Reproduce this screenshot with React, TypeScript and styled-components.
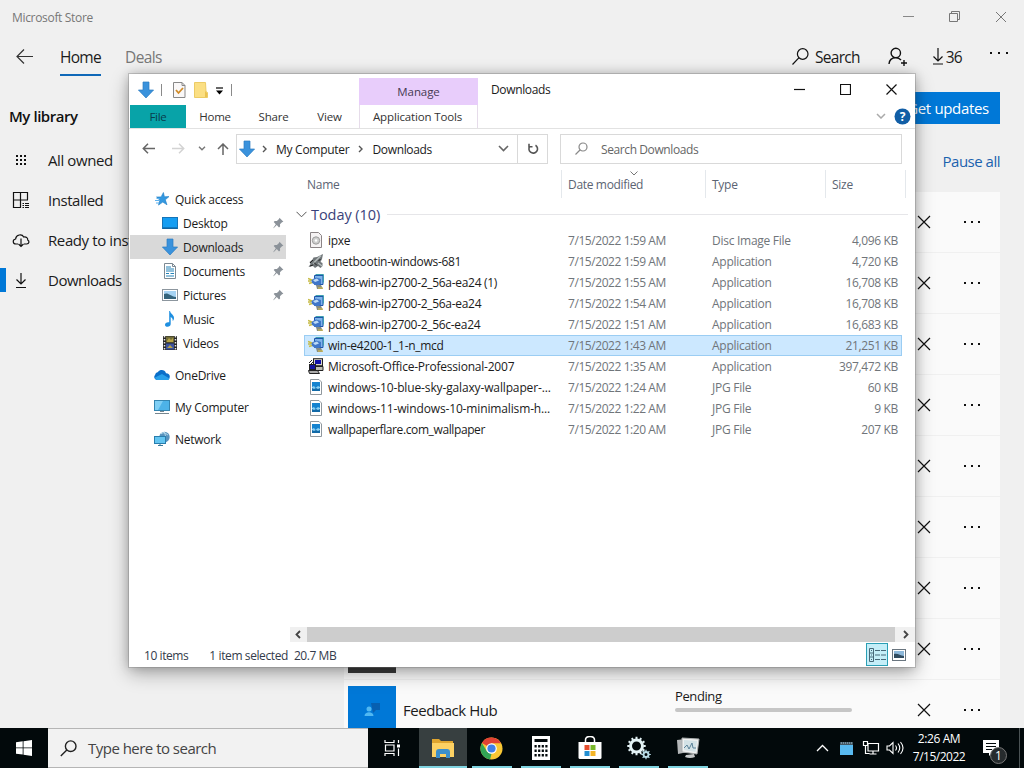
import React from "react";
import styled, { createGlobalStyle, css } from "styled-components";

const Global = createGlobalStyle`
  html, body { margin: 0; padding: 0; }
  body { font-family: "Open Sans", "Noto Sans", sans-serif; overflow: hidden; }
  * { box-sizing: border-box; }
  svg { display: block; flex: none; }
`;

const Desktop = styled.div`
  position: relative;
  width: 1024px;
  height: 768px;
  display: flex;
  flex-direction: column;
  overflow: hidden;
  background: #f0f0f0;
`;

const Label = styled.span<{ $size?: number; $track?: number; $color?: string; $ml?: number; $mr?: string }>`
  font-size: ${(p) => p.$size ?? 12}px;
  letter-spacing: ${(p) => p.$track ?? -0.27}px;
  color: ${(p) => p.$color ?? "#1b1b1b"};
  margin-left: ${(p) => p.$ml ?? 0}px;
  margin-right: ${(p) => p.$mr ?? "0"};
  padding-top: ${(p) => (p.$size ? 0 : 2)}px;
  line-height: 20px;
  white-space: nowrap;
`;

const Svg = styled.svg<{ $ml?: number; $mr?: number; $mt?: number }>`
  margin-left: ${(p) => p.$ml ?? 0}px;
  margin-right: ${(p) => p.$mr ?? 0}px;
  margin-top: ${(p) => p.$mt ?? 0}px;
`;

/* ---------- Store window ---------- */

const Store = styled.main`
  flex: 1;
  min-height: 0;
  display: flex;
  flex-direction: column;
  overflow: hidden;
`;

const StoreTitle = styled.header`
  height: 33px;
  flex: none;
  display: flex;
  align-items: center;
  justify-content: space-between;
  padding: 0 17px 0 12px;
`;

const StoreControls = styled.div`
  display: flex;
  align-items: center;
  gap: 35px;
`;

const StoreNav = styled.nav`
  height: 49px;
  flex: none;
  display: flex;
  align-items: center;
  padding: 0 14px 2px 16px;
`;

const NavTab = styled.div<{ $active?: boolean }>`
  height: 36px;
  margin-left: ${(p) => (p.$active ? 27 : 24)}px;
  margin-top: 3px;
  padding-top: 6px;
  border-bottom: 2px solid ${(p) => (p.$active ? "#0f68b8" : "transparent")};
`;

const NavActions = styled.div`
  margin-left: auto;
  display: flex;
  align-items: center;
`;

const MoreButton = styled.div`
  margin-bottom: 7px;
`;

const StoreBody = styled.div`
  flex: 1;
  min-height: 0;
  display: flex;
`;

const Library = styled.aside`
  width: 344px;
  padding-top: 24px;
`;

const LibraryHeading = styled.h2`
  margin: 0 0 14px 9px;
  font-size: 15px;
  line-height: 20px;
  font-weight: 600;
  letter-spacing: -0.45px;
  color: #111;
`;

const LibraryItem = styled.div<{ $active?: boolean }>`
  height: 40px;
  display: flex;
  align-items: center;
  gap: 18px;
  &::before {
    content: "";
    width: 6px;
    height: 24px;
    margin-right: -12px;
    background: ${(p) => (p.$active ? "#0078d7" : "transparent")};
  }
`;

const Queue = styled.section`
  width: 656px;
  padding-top: 10px;
  display: flex;
  flex-direction: column;
`;

const UpdateButton = styled.button`
  flex: none;
  align-self: flex-end;
  width: 104px;
  height: 32px;
  padding: 0;
  border: 0;
  background: #0078d7;
  font-family: inherit;
`;

const PauseLink = styled.div`
  flex: none;
  align-self: flex-end;
  margin: 27px 0 21px 0;
  height: 20px;
  line-height: 20px;
`;

const QueueRow = styled.div`
  height: 61px;
  flex: none;
  display: flex;
  align-items: center;
  padding: 0 20px 0 4px;
  background: #fafafa;
  border-bottom: 1px solid #f0f0f0;
`;

const AppTile = styled.div<{ $bg: string }>`
  width: 48px;
  height: 48px;
  display: flex;
  align-items: center;
  justify-content: center;
  background: ${(p) => p.$bg};
`;

const AppName = styled.div`
  width: 279px;
  padding-left: 7px;
`;

const Progress = styled.div`
  width: 177px;
  margin-bottom: 22px;
  display: flex;
  flex-direction: column;
`;

const Bar = styled.div`
  height: 4px;
  margin-top: 2px;
  border-radius: 2px;
  background: #c6c6c6;
`;

const RowActions = styled.div`
  margin-left: auto;
  display: flex;
  align-items: center;
  gap: 32px;
`;

/* ---------- Explorer window ---------- */

const Explorer = styled.section`
  position: absolute;
  left: 129px;
  top: 74px;
  width: 786px;
  height: 593px;
  display: flex;
  flex-direction: column;
  background: #fff;
  box-shadow: 0 0 0 1px rgba(120, 120, 120, 0.35), 0 6px 18px rgba(0, 0, 0, 0.32), 0 0 10px rgba(0, 0, 0, 0.18);
`;

const Ribbon = styled.header`
  height: 55px;
  flex: none;
  display: flex;
  border-bottom: 1px solid #e2e2e2;
`;

const RibbonLeft = styled.div`
  width: 230px;
`;

const QuickBar = styled.div`
  height: 31px;
  display: flex;
  align-items: center;
  padding-left: 9px;
`;

const Separator = styled.i<{ $ml: number; $mr?: number }>`
  width: 1px;
  height: 12px;
  margin-left: ${(p) => p.$ml}px;
  margin-right: ${(p) => p.$mr ?? 0}px;
  background: #8a8a8a;
`;

const TabRow = styled.div`
  height: 24px;
  display: flex;
  padding-left: 1px;
`;

const RibbonTab = styled.div<{ $w: number; $file?: boolean }>`
  width: ${(p) => p.$w}px;
  height: 23px;
  display: flex;
  align-items: center;
  justify-content: center;
  ${(p) => p.$file && css`background: #08a3a8;`}
`;

const ContextTab = styled.div`
  width: 119px;
  padding-top: 4px;
`;

const ContextHead = styled.div`
  height: 27px;
  display: flex;
  align-items: center;
  justify-content: center;
  background: #e8cdfb;
`;

const ContextBody = styled.div`
  height: 23px;
  display: flex;
  align-items: center;
  justify-content: center;
  padding-right: 2px;
  border: solid #e6dcea;
  border-width: 0 1px;
`;

const RibbonRight = styled.div`
  flex: 1;
  display: flex;
  flex-direction: column;
  justify-content: space-between;
`;

const WindowTitle = styled.div`
  height: 31px;
  display: flex;
  align-items: center;
  justify-content: space-between;
  padding: 0 18px 0 13px;
`;

const WindowControls = styled.div`
  display: flex;
  align-items: center;
  gap: 35px;
`;

const RibbonTools = styled.div`
  height: 24px;
  display: flex;
  align-items: center;
  justify-content: flex-end;
  gap: 8px;
  padding-right: 4px;
`;

const AddressRow = styled.div`
  height: 41px;
  flex: none;
  display: flex;
  align-items: center;
  padding: 0 13px 2px 13px;
`;

const AddressBox = styled.div`
  width: 312px;
  flex: none;
  height: 30px;
  margin-left: 7px;
  display: flex;
  align-items: center;
  border: 1px solid #d9d9d9;
  padding-left: 2px;
`;

const DropMark = styled.div`
  margin-right: 8px;
`;

const Refresh = styled.div`
  width: 30px;
  height: 28px;
  display: flex;
  align-items: center;
  justify-content: center;
  border-left: 1px solid #d9d9d9;
`;

const SearchBox = styled.div`
  flex: 1;
  height: 30px;
  margin-left: 12px;
  display: flex;
  align-items: center;
  gap: 13px;
  border: 1px solid #d9d9d9;
  padding-left: 14px;
`;

const Middle = styled.div`
  flex: 1;
  min-height: 0;
  display: flex;
`;

const Tree = styled.aside`
  width: 161px;
  padding-top: 17px;
`;

const TreeItem = styled.div<{ $level: number; $selected?: boolean; $tall?: boolean }>`
  width: 156px;
  height: ${(p) => (p.$tall ? 32 : 24)}px;
  margin-left: 1px;
  display: flex;
  align-items: center;
  gap: 5px;
  padding: 0 2px 0 ${(p) => (p.$level ? 32 : 24)}px;
  background: ${(p) => (p.$selected ? "#d9d9d9" : "transparent")};
  & > svg:last-child:not(:first-child) { margin-left: auto; }
`;

const TreeGroup = styled.div`
  margin-bottom: 4px;
`;

const Files = styled.div`
  flex: 1;
  display: flex;
  flex-direction: column;
`;

const HeaderRow = styled.div`
  display: grid;
  grid-template-columns: 257px 144px 120px 80px;
  height: 28px;
  margin-left: 15px;
`;

const HeaderCell = styled.div`
  position: relative;
  display: flex;
  align-items: center;
  border-right: 1px solid #e4e8ec;
  padding-left: 6px;
  &:first-child { padding-left: 2px; }
`;

const SortMark = styled.span`
  position: absolute;
  left: 68px;
  top: 1px;
`;

const GroupRow = styled.div`
  height: 32px;
  display: flex;
  align-items: center;
  gap: 4px;
  padding: 1px 7px 0 6px;
`;

const Rule = styled.i`
  flex: 1;
  height: 1px;
  margin-left: 3px;
  background: #e6e6e9;
`;

const FileRow = styled.div<{ $selected?: boolean }>`
  display: grid;
  grid-template-columns: 260px 144px 109px 1fr;
  grid-template-rows: 18px;
  align-items: center;
  width: 598px;
  height: 21px;
  margin-left: 14px;
  padding: 0 3px 1px;
  border: 1px solid ${(p) => (p.$selected ? "#9bcdf3" : "transparent")};
  background: ${(p) => (p.$selected ? "#cce8ff" : "transparent")};
  & span {
    height: 18px;
    padding-top: 0;
    line-height: 19px;
  }
`;

const FileName = styled.div`
  height: 18px;
  display: flex;
  align-items: center;
  gap: 4px;
`;

const SizeCell = styled(Label)`
  text-align: right;
`;

const Scroll = styled.div`
  height: 15px;
  margin-top: auto;
  display: flex;
  align-items: center;
  justify-content: space-between;
  padding: 0 6px 0 5px;
  background: #f0f0f0;
`;

const Thumb = styled.div`
  width: 588px;
  height: 15px;
  margin-right: 3px;
  background: #cdcdcd;
`;

const Status = styled.footer`
  height: 25px;
  flex: none;
  display: flex;
  align-items: center;
  padding: 0 9px 0 15px;
`;

const ViewButtons = styled.div`
  margin-left: auto;
  display: flex;
  align-items: center;
  gap: 4px;
`;

const DetailsButton = styled.div`
  width: 22px;
  height: 23px;
  display: flex;
  align-items: center;
  justify-content: center;
  border: 1px solid #2b9fb5;
  background: #c4eef8;
`;

/* ---------- Taskbar ---------- */

const Taskbar = styled.footer`
  height: 40px;
  flex: none;
  display: flex;
  background: #02090b;
`;

const StartButton = styled.div`
  width: 48px;
  display: flex;
  align-items: center;
  justify-content: center;
`;

const TaskSearch = styled.div`
  width: 320px;
  display: flex;
  align-items: center;
  gap: 11px;
  padding-left: 12px;
  background: #f2f2f2;
  border: solid #b5b5b5;
  border-width: 1px 0;
`;

const TaskButton = styled.div<{ $w?: number; $active?: boolean; $running?: boolean }>`
  width: ${(p) => p.$w ?? 49}px;
  display: flex;
  align-items: center;
  justify-content: center;
  position: relative;
  background: ${(p) => (p.$active ? "#373f40" : "transparent")};
  &::after {
    content: "";
    position: absolute;
    bottom: 0;
    left: ${(p) => (p.$active ? 0 : 5)}px;
    right: ${(p) => (p.$active ? 0 : 4)}px;
    height: 2px;
    background: ${(p) => (p.$running ? "#7fd3e0" : "transparent")};
  }
`;

const Tray = styled.div`
  margin-left: auto;
  padding-right: 4px;
  display: flex;
  align-items: center;
`;

const Clock = styled.div`
  width: 54px;
  margin-left: 8px;
  display: flex;
  flex-direction: column;
  align-items: center;
  & > span {
    padding-top: 0;
    line-height: 18px;
  }
`;

const Notice = styled.div`
  position: relative;
  width: 37px;
  margin-left: 17px;
  display: flex;
  align-items: center;
  height: 40px;
  border-right: 1px solid #4a5254;
`;

const Badge = styled.span`
  position: absolute;
  left: 7px;
  top: 19px;
  width: 17px;
  height: 17px;
  border: 1px solid #777;
  border-radius: 50%;
  background: #262b2d;
  color: #fff;
  font-size: 12px;
  line-height: 15px;
  text-align: center;
`;

/* ---------- Drawings ---------- */

type LineProps = { w: number; h: number; d: string; c?: string; s?: number; ml?: number };

const Line = ({ w, h, d, c = "#111", s = 1.2, ml }: LineProps) => (
  <Svg $ml={ml} width={w} height={h} viewBox={`0 0 ${w} ${h}`} fill="none" stroke={c} strokeWidth={s}>
    <path d={d} />
  </Svg>
);

const Dots = ({ w, step }: { w: number; step: number }) => (
  <svg width={w} height="4" viewBox={`0 0 ${w} 4`} fill="#111">
    {[0, 1, 2].map((i) => <rect key={i} x={i * step + 1} y="1" width="2" height="2" />)}
  </svg>
);

const BlueArrow = () => (
  <svg width="16" height="18" viewBox="0 0 16 18"><path d="M5 1h6v8h4.6L8 17 .4 9H5z" fill="#3a92dc" stroke="#2c7cc2" strokeWidth=".7" /></svg>
);

const Pin = () => (
  <svg width="11" height="12" viewBox="0 0 11 12" fill="#8b9299"><path d="M6.500.8l3.900 4-1.400.4-2 2 .1 2.200-1.100 1-2.200-2.400L.6 11.300l-.3-.4 2.500-3.600L.7 5l1-1 2.200.1 2.100-2z" /></svg>
);

const treeIcons: Record<string, React.ReactNode> = {
  star: <svg width="16" height="16" viewBox="0 0 16 16"><path d="M9.400 1.500l1 4.300 4.600-.2-3.700 3.200 1.700 5-4.200-2.700-4.300 3 1.300-4.900L2.500 6l4.600-.1z" fill="#3398e0" stroke="#1d7cc4" strokeWidth=".6" /><path d="M1 9.500h4M2 12h3M2.500 7.500h3" stroke="#5fb2ee" /></svg>,
  desktop: <svg width="16" height="16" viewBox="0 0 16 16"><rect x=".5" y="2.500" width="15" height="11" fill="#149df2" stroke="#1574b8" /><path d="M1 13h14" stroke="#0e548b" /></svg>,
  down: <BlueArrow />,
  doc: <svg width="16" height="16" viewBox="0 0 16 16"><path d="M2.500.5h8l3 3v12h-11z" fill="#fff" stroke="#7d8a94" /><path d="M4 6h8M4 8h8M4 10.500h3M8.500 10.500H12M4 13h8M4 4h5" stroke="#2583b8" /><path d="M10.500.5v3h3" fill="none" stroke="#7d8a94" /></svg>,
  pic: <svg width="16" height="16" viewBox="0 0 16 16"><rect x=".5" y="2.500" width="15" height="11" fill="#fff" stroke="#8c969e" /><rect x="2" y="4" width="12" height="8" fill="#a6d3f3" /><path d="M2 7c4-2 6 2 12 3v2H2z" fill="#35647c" /></svg>,
  music: <svg width="16" height="16" viewBox="0 0 16 16"><path d="M8 0c.5 3 4.500 4 4 7.500-.2 1.400-.8 2-1.300 2.600.3-2-.6-3.400-2-4.100V13c0 1.700-1.500 2.800-3.200 2.800C4 15.800 3 15 3 13.700 3 12 5 10.800 7.200 11.300V0z" fill="#1f8fe0" /></svg>,
  video: <svg width="16" height="16" viewBox="0 0 16 16"><rect x="1" y="1" width="14" height="14" fill="#262626" /><rect x="4" y="1.500" width="8" height="6" fill="#716c38" /><rect x="4" y="8.500" width="8" height="6" fill="#3c53a0" /><path d="M5 6l2-3 2 2 2-2v4H5zM5 13l3-3 3 3z" fill="#b8a446" /><path d="M2.500 1v14M13.500 1v14" stroke="#e8e8e8" strokeWidth="1.500" strokeDasharray="1.500 1.500" /></svg>,
  cloud: <svg width="16" height="16" viewBox="0 0 16 16"><path d="M1 8a3.600 3.600 0 0 1 3-3c2-3 7-2.500 8 1.200 3.400 0 4.600 3 3.300 5.200-.5 1-1.300 1.600-2.300 1.600H3.500C.3 13-.6 10 1 8z" fill="#0a6fc9" /><path d="M1 10.500L8 7l7.500 4.500c-.5 1-1.500 1.500-2.500 1.500H3.500C2.300 13 1 12 1 10.500z" fill="#28a0ea" /></svg>,
  computer: <svg width="16" height="16" viewBox="0 0 16 16"><rect x=".5" y="1.500" width="15" height="10" fill="#4db3e8" stroke="#3485b0" /><path d="M1 2h8l-5 9H1z" fill="#7fcff5" /><path d="M6 12.500h4M1 14.500h14" stroke="#76868f" /></svg>,
  network: <svg width="16" height="16" viewBox="0 0 16 16"><circle cx="10.500" cy="6" r="5.200" fill="#5792bd" /><path d="M7 3c3-3 5 0 7 1M10 1c2 3 2 7 0 9" stroke="#bfe0ef" fill="none" /><rect x=".5" y="5.500" width="11" height="7" fill="#64c5f1" stroke="#287eae" /><path d="M4 14.500h5M6 13v1" stroke="#3b7898" /></svg>,
};

const fileIcons: Record<string, React.ReactNode> = {
  disc: <svg width="16" height="16" viewBox="0 0 16 16"><path d="M2.500.5h8l3 3v12h-11z" fill="#f6f3f4" stroke="#8b8486" /><circle cx="8" cy="8.500" r="3.700" fill="#cfcfcf" stroke="#9c9c9c" /><circle cx="8" cy="8.500" r="1.200" fill="#fff" /></svg>,
  rocket: <svg width="16" height="16" viewBox="0 0 16 16"><path d="M15 1l-1 5-1.500 3 2 1v3l-2 2-2.500-2-3 2-2-2-4.500 1 2-3-1-2 3-2.500 1-2 3.500-.5z" fill="#6f7578" /><path d="M13 2.500L5 10.500M10 10l4 3" stroke="#b5bcbc" strokeWidth="1.500" fill="none" /><path d="M6 9.500l3 3M2 10l3-3M10.500 8l2-2M2 13l3-1" stroke="#242424" /></svg>,
  setup: <svg width="16" height="16" viewBox="0 0 16 16"><path d="M6.500 1.500h8.500v9H6.500z" fill="#7fb5e9" stroke="#1e55aa" /><path d="M7.500.5h8v8" fill="none" stroke="#40a0b0" /><path d="M3 6l5-2.500 5 1.500v5l-4 2-5-3z" fill="#3f76c8" /><path d="M5 6l4-1.500 2 2-4 1.500z" fill="#bddaf5" /><path d="M0 4.500l4 1.500M0 7h3M1 9.500l3-1" stroke="#c6bb45" strokeWidth="1.400" /><path d="M8 11h5l2 4H9z" fill="#858b82" /><path d="M10 14h5" stroke="#e4c63c" /></svg>,
  office: <svg width="16" height="16" viewBox="0 0 16 16"><rect x="5.500" y=".7" width="9" height="7" fill="#d6d5cb" stroke="#222" /><rect x="7" y="2" width="6" height="4" fill="#1111a8" /><path d="M5 8.500h10v4H5z" fill="#bdbdb5" stroke="#222" /><rect x="1.500" y="6.500" width="6" height="5" fill="#1616a0" stroke="#222" /><path d="M.5 12.500h9l2 3h-10z" fill="#aaa" stroke="#222" /><path d="M1 5l3-3M3 6l2-2" stroke="#222" /></svg>,
  jpg: <svg width="16" height="16" viewBox="0 0 16 16"><path d="M2.500.5h8.500l2.500 2.500v12.500h-11z" fill="#fff" stroke="#8f979d" /><rect x="4" y="3" width="8" height="9" fill="#1583cf" /><path d="M4 8l2-1 1.500 2L10 7l2 1v4H4z" fill="#8bd0f4" /><path d="M4 9l2 1 2-1 2 1 2-1v3H4z" fill="#126aa8" /></svg>,
};

type TreeEntry = { icon: string; label: string; level: number; pin?: boolean; selected?: boolean; tall?: boolean };

const quickTree: TreeEntry[] = [
  { icon: "star", label: "Quick access", level: 0 },
  { icon: "desktop", label: "Desktop", level: 1, pin: true },
  { icon: "down", label: "Downloads", level: 1, pin: true, selected: true },
  { icon: "doc", label: "Documents", level: 1, pin: true },
  { icon: "pic", label: "Pictures", level: 1, pin: true },
  { icon: "music", label: "Music", level: 1 },
  { icon: "video", label: "Videos", level: 1 },
];

const placeTree: TreeEntry[] = [
  { icon: "cloud", label: "OneDrive", level: 0, tall: true },
  { icon: "computer", label: "My Computer", level: 0, tall: true },
  { icon: "network", label: "Network", level: 0, tall: true },
];

const files = [
  ["disc", "ipxe", "1:59", "Disc Image File", "4,096"],
  ["rocket", "unetbootin-windows-681", "1:59", "Application", "4,720"],
  ["setup", "pd68-win-ip2700-2_56a-ea24 (1)", "1:55", "Application", "16,708"],
  ["setup", "pd68-win-ip2700-2_56a-ea24", "1:54", "Application", "16,708"],
  ["setup", "pd68-win-ip2700-2_56c-ea24", "1:51", "Application", "16,683"],
  ["setup", "win-e4200-1_1-n_mcd", "1:43", "Application", "21,251"],
  ["office", "Microsoft-Office-Professional-2007", "1:35", "Application", "397,472"],
  ["jpg", "windows-10-blue-sky-galaxy-wallpaper-...", "1:24", "JPG File", "60"],
  ["jpg", "windows-11-windows-10-minimalism-h...", "1:22", "JPG File", "9"],
  ["jpg", "wallpaperflare.com_wallpaper", "1:20", "JPG File", "207"],
];

const nameTrack = (name: string) => {
  if (name.endsWith("...")) return -0.14;
  if (name.startsWith("wallpaper")) return -0.39;
  return name.startsWith("Microsoft") ? -0.22 : -0.3;
};

const gear = (cx: number, cy: number, r: number, n: number) =>
  Array.from({ length: n }, (_, i) => {
    const a = (i * 2 * Math.PI) / n;
    return `M${cx + Math.cos(a) * r} ${cy + Math.sin(a) * r}L${cx + Math.cos(a) * (r + 2.2)} ${cy + Math.sin(a) * (r + 2.2)}`;
  }).join("");

const StoreWindow = () => (
  <Store>
    <StoreTitle>
      <Label $track={-0.32} $color="#777">Microsoft Store</Label>
      <StoreControls>
        <Line w={11} h={11} d="M0 5.500h11" c="#888" s={1} />
        <Line w={11} h={11} d="M.5 2.500h8v8h-8zM2.500 2.500v-2h8v8h-2" c="#777" s={1} />
        <Line w={12} h={12} d="M1 1l10 10M11 1L1 11" c="#777" s={1} />
      </StoreControls>
    </StoreTitle>
    <StoreNav>
      <Line w={17} h={15} d="M8 .5l-7 7 7 7M1 7.500h16" c="#333" />
      <NavTab $active><Label $size={15.5} $track={-0.7}>Home</Label></NavTab>
      <NavTab><Label $size={15.5} $track={-0.6} $color="#777">Deals</Label></NavTab>
      <NavActions>
        <Line w={17} h={17} d="M16 6a5.300 5.300 0 1 1-10.600 0A5.300 5.300 0 0 1 16 6zM6.800 9.800L.5 16.500" />
        <Label $size={15.5} $track={-0.75} $ml={6}>Search</Label>
        <Line ml={28} w={20} h={20} s={1.4} d="M12.500 6a4.700 4.700 0 1 1-9.400 0 4.700 4.700 0 0 1 9.400 0M1 17c.3-4 3-6.300 6.800-6.300 2.300 0 4 .8 5.200 2.300M16 13v6M13 16h6" />
        <Line ml={24} w={12} h={17} d="M6 0v13M1.500 8.500L6 13l4.500-4.500M1 16h10" />
        <Label $size={15.5} $track={-0.7} $ml={2} $mr="27px">36</Label>
        <MoreButton><Dots w={21} step={8} /></MoreButton>
      </NavActions>
    </StoreNav>
    <StoreBody>
      <Library>
        <LibraryHeading>My library</LibraryHeading>
        <LibraryItem>
          <svg width="18" height="18" viewBox="0 0 18 18" fill="#111">{[0, 1, 2].map((x) => [0, 1, 2].map((y) => <rect key={`${x}${y}`} x={4 + x * 4} y={4 + y * 4} width="2" height="2" />))}</svg>
          <Label $size={15} $track={-0.4}>All owned</Label>
        </LibraryItem>
        <LibraryItem>
          <Line w={18} h={18} d="M8.500 16.500h-7v-15h14v7M8.500 1v16M1 9h15M10.500 12.500h1.500M13 12.500h4M10.500 14.500h1.500M13 14.500h4M10.500 16.500h1.500M13 16.500h4" />
          <Label $size={15} $track={-0.45}>Installed</Label>
        </LibraryItem>
        <LibraryItem>
          <Line w={18} h={18} d="M6 13H4C.5 13 .3 8.500 3.600 8 4 3.500 10 2.500 11.700 6c3.300-.3 4.300 1.500 4 3 2 1 1.500 4-1 4H12M9 7.500v8M6.500 13L9 15.500l2.500-2.500" />
          <Label $size={15} $track={-0.4}>Ready to install</Label>
        </LibraryItem>
        <LibraryItem $active>
          <Line w={18} h={18} d="M9 2v11M4.500 8.500L9 13l4.500-4.500M4 16.500h10" />
          <Label $size={15} $track={-0.5}>Downloads</Label>
        </LibraryItem>
      </Library>
      <Queue>
        <UpdateButton><Label $size={15} $track={-0.35} $color="#fff">Get updates</Label></UpdateButton>
        <PauseLink><Label $size={15} $track={-0.5} $color="#1b62ae">Pause all</Label></PauseLink>
        {Array.from({ length: 9 }, (_, i) => (
          <QueueRow key={i}>
            <AppTile $bg={i === 8 ? "#0078d7" : "#3b3b3b"}>
              {i === 8 && (
                <svg width="20" height="20" viewBox="0 0 20 20"><path d="M9 3h9v7h-4l-3 3z" fill="#075fb0" /><circle cx="7" cy="9" r="2.500" fill="#50b8f2" /><path d="M2.500 16c0-5 9-5 9 0z" fill="#50b8f2" /></svg>
              )}
            </AppTile>
            <AppName>{i === 8 && <Label $size={15} $track={-0.45}>Feedback Hub</Label>}</AppName>
            {i === 8 && <Progress><Label $size={13} $track={-0.4}>Pending</Label><Bar /></Progress>}
            <RowActions>
              <Line w={14} h={14} d="M1 1l12 12M13 1L1 13" />
              <Dots w={17} step={7} />
            </RowActions>
          </QueueRow>
        ))}
      </Queue>
    </StoreBody>
  </Store>
);

const TreeRow = ({ entry }: { entry: TreeEntry }) => (
  <TreeItem $level={entry.level} $selected={entry.selected} $tall={entry.tall}>
    {treeIcons[entry.icon]}
    <Label $track={-0.26}>{entry.label}</Label>
    {entry.pin && <Pin />}
  </TreeItem>
);

const ExplorerWindow = () => (
  <Explorer>
    <Ribbon>
      <RibbonLeft>
        <QuickBar>
          <BlueArrow />
          <Separator $ml={7} $mr={11} />
          <svg width="13" height="16" viewBox="0 0 13 16"><path d="M.5.5h8.500l3 3v12H.5z" fill="#faf8f8" stroke="#888" /><path d="M9 .5v3h3" fill="none" stroke="#888" /><path d="M3 8l2.500 3L10 6" fill="none" stroke="#d08b28" strokeWidth="1.800" /></svg>
          <Svg $ml={8} width="14" height="16" viewBox="0 0 14 16"><path d="M.5.5h11l.5 9 1.500 1v5H.5z" fill="#fbdf83" stroke="#eccb65" /><path d="M11 15V9l2 2v4z" fill="#eac250" /></Svg>
          <Svg $ml={7} $mt={2} width="9" height="8" viewBox="0 0 9 8"><path d="M1 1h7" stroke="#000" strokeWidth="1.200" /><path d="M1 3.500h7L4.500 7.500z" fill="#000" /></Svg>
          <Separator $ml={7} />
        </QuickBar>
        <TabRow>
          <RibbonTab $w={56} $file><Label $size={11.5} $color="#083c4c">File</Label></RibbonTab>
          <RibbonTab $w={58}><Label $size={11.5} $color="#333" $track={-0.2}>Home</Label></RibbonTab>
          <RibbonTab $w={59}><Label $size={11.5} $color="#333" $track={-0.2}>Share</Label></RibbonTab>
          <RibbonTab $w={53}><Label $size={11.5} $color="#333" $track={-0.2}>View</Label></RibbonTab>
        </TabRow>
      </RibbonLeft>
      <ContextTab>
        <ContextHead><Label $size={11.5} $track={-0.1} $color="#463a52">Manage</Label></ContextHead>
        <ContextBody><Label $size={11.5} $track={-0.15} $color="#333">Application Tools</Label></ContextBody>
      </ContextTab>
      <RibbonRight>
        <WindowTitle>
          <Label $track={-0.35}>Downloads</Label>
          <WindowControls>
            <Line w={11} h={11} d="M0 5.500h11" />
            <Line w={11} h={11} d="M.5.5h10v10H.5z" />
            <Line w={11} h={11} d="M.5.5l10 10M10.500.5l-10 10" />
          </WindowControls>
        </WindowTitle>
        <RibbonTools>
          <Line w={10} h={6} d="M1 1l4 4 4-4" c="#aaa" s={1.5} />
          <svg width="17" height="17" viewBox="0 0 17 17"><circle cx="8.500" cy="8.500" r="8" fill="#115ea6" /><text x="8.500" y="13" textAnchor="middle" fill="#fff" fontSize="12" fontWeight="700">?</text></svg>
        </RibbonTools>
      </RibbonRight>
    </Ribbon>
    <AddressRow>
      <Line w={13} h={11} d="M6 .8L1.300 5.500 6 10.200M1.500 5.500H13" c="#666" s={1.5} />
      <Line ml={17} w={13} h={11} d="M7 .8l4.700 4.700L7 10.200M11.500 5.500H0" c="#d3d3d3" s={1.5} />
      <Line ml={13} w={8} h={5} d="M1 .8l3 3 3-3" c="#777" s={1.4} />
      <Line ml={11} w={12} h={12} d="M1 6l5-5 5 5M6 1.500V12" c="#666" s={1.5} />
      <AddressBox>
        <BlueArrow />
        <Line ml={7} w={5} h={8} d="M1 1l3 3-3 3" c="#555" s={1.4} />
        <Label $ml={9}>My Computer</Label>
        <Line ml={9} w={5} h={8} d="M1 1l3 3-3 3" c="#555" s={1.4} />
        <Label $ml={9} $mr="auto" $track={-0.35}>Downloads</Label>
        <DropMark><Line w={11} h={7} d="M1 1l4.500 4.500L10 1" c="#666" s={1.6} /></DropMark>
        <Refresh><Line w={12} h={12} d="M8.500 2.200A4.300 4.300 0 1 1 3 3M2 .8v3h3.500" c="#555" s={1.6} /></Refresh>
      </AddressBox>
      <SearchBox>
        <Line w={13} h={13} d="M12 5a4 4 0 1 1-8 0 4 4 0 0 1 8 0M5 8l-4.500 4.500" c="#888" />
        <Label $color="#666" $track={-0.4}>Search Downloads</Label>
      </SearchBox>
    </AddressRow>
    <Middle>
      <Tree>
        <TreeGroup>{quickTree.map((t) => <TreeRow key={t.label} entry={t} />)}</TreeGroup>
        {placeTree.map((t) => <TreeRow key={t.label} entry={t} />)}
      </Tree>
      <Files>
        <HeaderRow>
          <HeaderCell><Label $color="#5b6473">Name</Label></HeaderCell>
          <HeaderCell><Label $color="#5b6473" $track={-0.33}>Date modified</Label><SortMark><Line w={8} h={5} d="M.5.5L4 4 7.500.5" c="#777" s={1} /></SortMark></HeaderCell>
          <HeaderCell><Label $color="#5b6473">Type</Label></HeaderCell>
          <HeaderCell><Label $color="#5b6473">Size</Label></HeaderCell>
        </HeaderRow>
        <GroupRow>
          <Line w={11} h={7} d="M.5.8l5 5 5-5" c="#555" s={1} />
          <Label $size={14.5} $track={-0.05} $color="#39427a">Today (10)</Label>
          <Rule />
        </GroupRow>
        {files.map(([icon, name, time, type, size]) => (
          <FileRow key={name} $selected={name === "win-e4200-1_1-n_mcd"}>
            <FileName>{fileIcons[icon]}<Label $track={nameTrack(name)}>{name}</Label></FileName>
            <Label $color="#70757a" $track={-0.43}>7/15/2022 {time} AM</Label>
            <Label $color="#70757a">{type}</Label>
            <SizeCell $color="#70757a" $track={-0.35}>{size} KB</SizeCell>
          </FileRow>
        ))}
        <Scroll>
          <Line w={6} h={9} d="M5 1L1.500 4.500 5 8" c="#444" s={1.8} />
          <Thumb />
          <Line w={6} h={9} d="M1 1l3.500 3.500L1 8" c="#444" s={1.8} />
        </Scroll>
      </Files>
    </Middle>
    <Status>
      <Label $track={-0.42} $color="#333b4b">10 items</Label>
      <Label $track={-0.4} $color="#333b4b" $ml={21}>1 item selected</Label>
      <Label $track={-0.45} $color="#333b4b" $ml={6}>20.7 MB</Label>
      <ViewButtons>
        <DetailsButton>
          <svg width="17" height="14" viewBox="0 0 17 14" fill="none" stroke="#476878"><path d="M.5.5h4v13h-4zM.5 5h4M.5 9h4M6 2.500h5M12 2.500h5M6 7h5M12 7h5M6 11.500h5M12 11.500h5M2 2.500h1M2 7h1M2 11.500h1" /></svg>
        </DetailsButton>
        <svg width="14" height="12" viewBox="0 0 14 12"><rect x=".5" y=".5" width="13" height="11" fill="#fff" stroke="#69757f" /><rect x="2" y="2" width="10" height="7" fill="#8db8da" /><path d="M2 5c4-1 6 2 10 2v2H2z" fill="#314c60" /></svg>
      </ViewButtons>
    </Status>
  </Explorer>
);

const TaskbarStrip = () => (
  <Taskbar>
    <StartButton><svg width="16" height="16" viewBox="0 0 16 16" fill="#fff"><path d="M0 2.200l6.700-.9v6.200H0zM7.500 1.200L16 0v7.500H7.500zM0 8.300h6.700v6.300L0 13.700zM7.500 8.300H16V16l-8.500-1.200z" /></svg></StartButton>
    <TaskSearch>
      <Line w={17} h={17} d="M16 6.200a5.300 5.300 0 1 1-10.600 0 5.300 5.300 0 0 1 10.600 0M6.800 10L.8 16" c="#222" s={1.4} />
      <Label $size={15} $track={-0.52} $color="#444">Type here to search</Label>
    </TaskSearch>
    <TaskButton $w={51}>
      <Svg $mr={3} width="17" height="16" viewBox="0 0 17 16" fill="none" stroke="#fff" strokeWidth="1.200"><path d="M1 0v2.500h9V0M1.500 5h8.500v6H1.500zM1 16v-2.500h9V16M14.500 0v3M14.500 8.500V16" /><path d="M13 4.500h3v3h-3z" fill="#fff" stroke="none" /></Svg>
    </TaskButton>
    <TaskButton $w={48} $active $running>
      <svg width="22" height="19" viewBox="0 0 22 19"><path d="M0 0h7l2 2h12v4H0z" fill="#dfa52f" /><path d="M0 4h22v14H0z" fill="#fcd163" /><path d="M4 19v-6q0-3 3-3h8q3 0 3 3v6h-4v-4H8v4z" fill="#3b8fcb" /></svg>
    </TaskButton>
    <TaskButton $running>
      <svg width="23" height="23" viewBox="0 0 24 24"><circle cx="12" cy="12" r="11.500" fill="#f8c735" /><path d="M12 12L2 6.300A11.500 11.500 0 0 1 22 6.500H12z" fill="#e24134" /><path d="M2 6.300L7.300 15 12 17.500l-1.500 6A11.500 11.500 0 0 1 2 6.300z" fill="#32a455" /><circle cx="12" cy="12" r="5.500" fill="#fff" /><circle cx="12" cy="12" r="4.300" fill="#407fe8" /></svg>
    </TaskButton>
    <TaskButton $running>
      <svg width="18" height="24" viewBox="0 0 18 24"><path d="M0 0h18v24H0z" fill="#fff" /><path d="M2.500 3h13v3h-13z" fill="#02090b" />{[0, 1, 2, 3].map((x) => [0, 1, 2].map((y) => <rect key={`${x}${y}`} x={2.5 + x * 3.6} y={9 + y * 4.5} width="2.200" height="2.500" fill="#02090b" />))}</svg>
    </TaskButton>
    <TaskButton $running>
      <svg width="24" height="24" viewBox="0 0 24 24"><path d="M7.500 7V4q0-3.500 4.500-3.500T16.500 4v3" fill="none" stroke="#fff" strokeWidth="1.500" /><path d="M.5 6h23v15.500q0 1.500-1.500 1.500H2q-1.500 0-1.500-1.500z" fill="#fff" /><path d="M6.500 9h5v5h-5z" fill="#e44d2e" /><path d="M12.500 9h5v5h-5z" fill="#79b82a" /><path d="M6.500 15h5v5h-5z" fill="#238fd2" /><path d="M12.500 15h5v5h-5z" fill="#f4b526" /></svg>
    </TaskButton>
    <TaskButton $running>
      <svg width="24" height="24" viewBox="0 0 24 24" fill="none" stroke="#e4f3f6"><circle cx="9.500" cy="10" r="6" strokeWidth="3" /><path d={gear(9.5, 10, 7, 12)} strokeWidth="2" /><circle cx="19" cy="18.500" r="2.500" strokeWidth="2" stroke="#b8dce6" /><path d={gear(19, 18.5, 2.6, 8)} strokeWidth="1.200" stroke="#b8dce6" /></svg>
    </TaskButton>
    <TaskButton $running>
      <svg width="24" height="22" viewBox="0 0 24 22"><path d="M1 3l8-1 3 13-10 2z" fill="#b4b7b9" /><path d="M6 1l17 1-2 15-15-2z" fill="#eff0f0" stroke="#a9adae" /><path d="M8 3l13 1-1.500 11L8 13z" fill="#d3e2e6" /><path d="M8 11l3-3 2 4 3-6 1 5h3" fill="none" stroke="#5b8299" /><path d="M10 18l8-1 1 3q-5 2-10 0z" fill="#c6c9ca" /></svg>
    </TaskButton>
    <Tray>
      <Line w={13} h={8} d="M1 7l5.500-5.500L12 7" c="#fff" s={1.3} />
      <Svg $ml={11} width="13" height="13" viewBox="0 0 13 13"><path d="M0 0h13v13H0z" fill="#58b9ef" /><path d="M0 0h13v3H0z" fill="#435763" /><path d="M1 1h11" stroke="#a7c6d6" strokeDasharray="1 1" /></Svg>
      <Line ml={9} w={18} h={14} d="M6 2.500h10.500v7.500H6zM11 10v3M7.500 13h7M1.500.5h4v4h-4zM3.500 5v7.500h4" c="#fff" />
      <Line ml={6} w={18} h={14} d="M1 5v4h2.500L7 12.500v-11L3.500 5zM9.500 4.500q2 2.500 0 5M12 2.500q3.500 4.500 0 9M14.500 1q5 6 0 12" c="#fff" s={1.1} />
      <Clock>
        <Label $track={-0.4} $color="#fff">2:26 AM</Label>
        <Label $track={-0.5} $color="#fff">7/15/2022</Label>
      </Clock>
      <Notice>
        <svg width="16" height="17" viewBox="0 0 16 17"><path d="M0 0h16v13H9l-3 3v-3H0z" fill="#fff" /><path d="M3 3.500h10M3 6.500h10M3 9.500h6" stroke="#02090b" strokeWidth="1.200" /></svg>
        <Badge>1</Badge>
      </Notice>
    </Tray>
  </Taskbar>
);

export default function App() {
  return (
    <Desktop>
      <Global />
      <StoreWindow />
      <TaskbarStrip />
      <ExplorerWindow />
    </Desktop>
  );
}
